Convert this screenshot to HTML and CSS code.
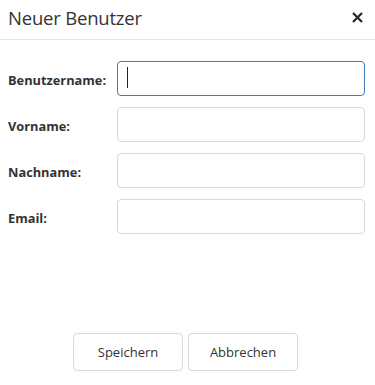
FILE: index.html
```html
<!DOCTYPE html>
<html lang="de">
<head>
<meta charset="utf-8">
<title>Neuer Benutzer</title>
<link rel="stylesheet" href="styles.css">
</head>
<body>
<div class="dialog">
  <div class="dialog-header">
    <h4 class="dialog-title">Neuer Benutzer</h4>
    <svg class="dialog-close" width="11" height="11" viewBox="0 0 11 11" aria-label="Schließen"><path d="M1 1 L10 10 M10 1 L1 10" stroke="#2b2b2b" stroke-width="2.3" stroke-linecap="butt" fill="none"/></svg>
  </div>
  <form class="dialog-body">
    <label class="field-label" for="u">Benutzername:</label>
    <div class="field-box field-box--focus"><input id="u" class="field-input" type="text"><span class="caret"></span></div>
    <label class="field-label" for="v">Vorname:</label>
    <div class="field-box"><input id="v" class="field-input" type="text"></div>
    <label class="field-label" for="n">Nachname:</label>
    <div class="field-box"><input id="n" class="field-input" type="text"></div>
    <label class="field-label" for="e">Email:</label>
    <div class="field-box"><input id="e" class="field-input" type="text"></div>
  </form>
  <div class="dialog-footer">
    <button class="btn" type="button">Speichern</button>
    <button class="btn" type="button">Abbrechen</button>
  </div>
</div>
</body>
</html>
```

FILE: styles.css
```css
html, body {
  margin: 0;
  padding: 0;
  background: #fff;
}
body {
  font-family: "Open Sans", "Noto Sans", sans-serif;
  color: #333;
}
.dialog {
  width: 375px;
  height: 385px;
  display: flex;
  flex-direction: column;
}
.dialog-header {
  height: 40px;
  box-sizing: border-box;
  border-bottom: 1px solid #e5e5e5;
  display: flex;
  align-items: center;
  justify-content: space-between;
  padding: 0 12px 5px 8px;
}
.dialog-title {
  margin: 0;
  font-size: 18.5px;
  font-weight: 400;
  color: #333;
  letter-spacing: -0.2px;
}
.dialog-close {
  display: block;
  margin-top: 1px;
}
.dialog-body {
  margin: 0;
  padding: 21px 10px 0 8px;
  display: grid;
  grid-template-columns: 109px 1fr;
  row-gap: 11px;
  align-items: center;
}
.field-label {
  font-size: 12.8px;
  font-weight: 700;
  color: #333;
  padding-top: 3px;
}
.field-box {
  position: relative;
  height: 35px;
  box-sizing: border-box;
  border: 1px solid #d9d9d9;
  border-radius: 4px;
  background: #fff;
}
.field-box--focus {
  border-color: #3a7cbd;
}
.field-input {
  width: 100%;
  height: 100%;
  box-sizing: border-box;
  border: 0;
  outline: none;
  background: transparent;
  padding: 0 10px;
  font: inherit;
  font-size: 13px;
  caret-color: transparent;
}
.caret {
  position: absolute;
  left: 9px;
  top: 5px;
  width: 1px;
  height: 21px;
  background: #222;
}
.dialog-footer {
  margin-top: auto;
  padding-bottom: 14px;
  display: flex;
  justify-content: center;
  gap: 5px;
  padding-right: 4px;
}
.btn {
  width: 110px;
  height: 38px;
  background: #fff;
  border: 1px solid #d9d9d9;
  border-radius: 4px;
  font-family: "Open Sans", "Noto Sans", sans-serif;
  font-size: 13px;
  color: #333;
  padding: 0;
}
```
